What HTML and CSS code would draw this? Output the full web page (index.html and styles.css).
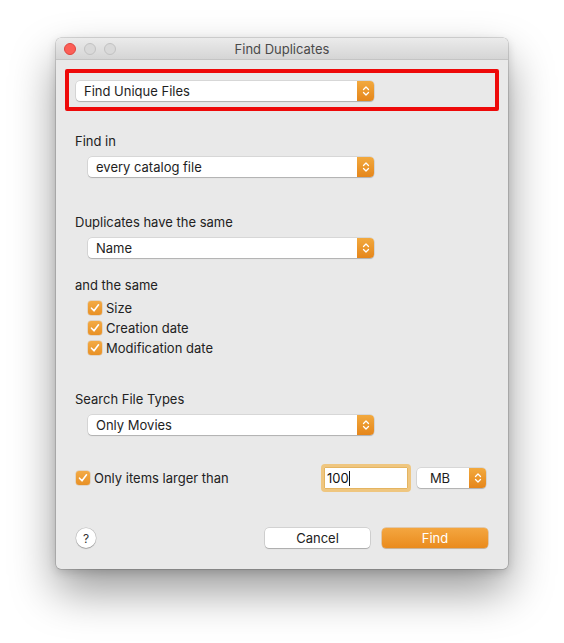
FILE: index.html
```html
<!DOCTYPE html>
<html>
<head>
<meta charset="utf-8">
<link rel="stylesheet" href="styles.css">
</head>
<body>
<div class="window">
  <div class="titlebar">
    <div class="lights">
      <span class="light red"></span>
      <span class="light gray"></span>
      <span class="light gray"></span>
    </div>
    <div class="title">Find Duplicates</div>
  </div>
  <div class="content">
    <div class="highlight">
      <div class="popup wide">
        <span class="popup-text">Find Unique Files</span>
        <span class="stepper"><svg width="8" height="12" viewBox="0 0 8 12"><path d="M1.5 4.5L4 2L6.5 4.5M1.5 7.5L4 10L6.5 7.5" fill="none" stroke="#fff" stroke-width="1.3" stroke-linecap="round" stroke-linejoin="round"/></svg></span>
      </div>
    </div>

    <div class="label l-findin">Find in</div>
    <div class="popup indented">
      <span class="popup-text">every catalog file</span>
      <span class="stepper"><svg width="8" height="12" viewBox="0 0 8 12"><path d="M1.5 4.5L4 2L6.5 4.5M1.5 7.5L4 10L6.5 7.5" fill="none" stroke="#fff" stroke-width="1.3" stroke-linecap="round" stroke-linejoin="round"/></svg></span>
    </div>

    <div class="label l-dup">Duplicates have the same</div>
    <div class="popup indented">
      <span class="popup-text">Name</span>
      <span class="stepper"><svg width="8" height="12" viewBox="0 0 8 12"><path d="M1.5 4.5L4 2L6.5 4.5M1.5 7.5L4 10L6.5 7.5" fill="none" stroke="#fff" stroke-width="1.3" stroke-linecap="round" stroke-linejoin="round"/></svg></span>
    </div>

    <div class="label l-and">and the same</div>
    <div class="checks">
      <label class="check-row"><span class="checkbox"><svg width="14" height="14" viewBox="0 0 14 14"><path d="M3.5 7.2L6 9.8L10.5 3.8" fill="none" stroke="#fff" stroke-width="1.6" stroke-linecap="round" stroke-linejoin="round"/></svg></span>Size</label>
      <label class="check-row"><span class="checkbox"><svg width="14" height="14" viewBox="0 0 14 14"><path d="M3.5 7.2L6 9.8L10.5 3.8" fill="none" stroke="#fff" stroke-width="1.6" stroke-linecap="round" stroke-linejoin="round"/></svg></span>Creation date</label>
      <label class="check-row"><span class="checkbox"><svg width="14" height="14" viewBox="0 0 14 14"><path d="M3.5 7.2L6 9.8L10.5 3.8" fill="none" stroke="#fff" stroke-width="1.6" stroke-linecap="round" stroke-linejoin="round"/></svg></span>Modification date</label>
    </div>

    <div class="label l-search">Search File Types</div>
    <div class="popup indented">
      <span class="popup-text">Only Movies</span>
      <span class="stepper"><svg width="8" height="12" viewBox="0 0 8 12"><path d="M1.5 4.5L4 2L6.5 4.5M1.5 7.5L4 10L6.5 7.5" fill="none" stroke="#fff" stroke-width="1.3" stroke-linecap="round" stroke-linejoin="round"/></svg></span>
    </div>

    <div class="size-row">
      <label class="check-row solo"><span class="checkbox"><svg width="14" height="14" viewBox="0 0 14 14"><path d="M3.5 7.2L6 9.8L10.5 3.8" fill="none" stroke="#fff" stroke-width="1.6" stroke-linecap="round" stroke-linejoin="round"/></svg></span>Only items larger than</label>
      <div class="field"><span class="field-text">100</span><span class="caret"></span></div>
      <div class="popup unit">
        <span class="popup-text center">MB</span>
        <span class="stepper"><svg width="8" height="12" viewBox="0 0 8 12"><path d="M1.5 4.5L4 2L6.5 4.5M1.5 7.5L4 10L6.5 7.5" fill="none" stroke="#fff" stroke-width="1.3" stroke-linecap="round" stroke-linejoin="round"/></svg></span>
      </div>
    </div>

    <div class="button-row">
      <div class="help">?</div>
      <div class="buttons">
        <div class="btn cancel">Cancel</div>
        <div class="btn primary">Find</div>
      </div>
    </div>
  </div>
</div>
</body>
</html>
```
FILE: styles.css
```css
html, body {
  margin: 0;
  padding: 0;
  background: #ffffff;
}
body {
  padding: 38px 0 0 56px;
  min-height: 643px;
  box-sizing: border-box;
  font-family: Inter, "Helvetica Neue", "Liberation Sans", sans-serif;
  font-size: 13px;
  color: #222;
}
.window {
  width: 452px;
  height: 531px;
  box-sizing: border-box;
  background: #e9e9e9;
  border-radius: 5px;
  box-shadow: 0 0 0 0.5px rgba(0,0,0,0.25), 0 22px 45px rgba(0,0,0,0.4), 0 3px 10px rgba(0,0,0,0.15);
  display: flex;
  flex-direction: column;
}
.titlebar {
  height: 22px;
  box-sizing: border-box;
  background: linear-gradient(#ebebeb, #d5d5d5);
  border-bottom: 1px solid #c4c4c4;
  border-radius: 5px 5px 0 0;
  display: flex;
  align-items: center;
}
.lights {
  display: flex;
  gap: 8px;
  padding-left: 8px;
}
.light {
  width: 12px;
  height: 12px;
  border-radius: 50%;
  box-sizing: border-box;
}
.light.red {
  background: #fc5f57;
  border: 0.5px solid #e0443e;
}
.light.gray {
  background: #d9d9d9;
  border: 0.5px solid #c2c2c2;
}
.title {
  flex: 1;
  text-align: center;
  margin-left: -60px;
  color: #4a4a4a;
  font-size: 13px;
  padding-top: 1px;
}
.content {
  display: flex;
  flex-direction: column;
  padding: 9px 20px 0 19px;
}
.highlight {
  width: 434px;
  height: 42px;
  margin-left: -10px;
  box-sizing: border-box;
  border: 4px solid #ee0a0a;
  border-radius: 2px;
  padding: 8px 0 0 7px;
}
.popup {
  height: 20px;
  box-sizing: border-box;
  background: #fff;
  border-radius: 4px;
  box-shadow: 0 0 0 0.5px rgba(0,0,0,0.15), 0 1px 1px rgba(0,0,0,0.18);
  display: flex;
  align-items: center;
}
.popup.wide { width: 298px; }
.popup.indented {
  width: 286px;
  margin-left: 13px;
  margin-top: 8px;
}
.popup-text {
  flex: 1;
  padding-left: 8px;
  color: #1e1e1e;
  line-height: 20px;
}
.popup-text.center {
  text-align: center;
  padding-left: 0;
  padding-right: 6px;
}
.stepper {
  width: 17px;
  height: 20px;
  border-radius: 0 4px 4px 0;
  background: linear-gradient(#f2a93e, #e5861b);
  display: flex;
  align-items: center;
  justify-content: center;
}
.label {
  line-height: 16px;
  color: #222;
}
.l-findin { margin-top: 22px; }
.l-dup { margin-top: 37px; }
.l-and { margin-top: 19px; }
.l-search { margin-top: 33px; }
.checks {
  margin-top: 5px;
  margin-left: 13px;
  display: flex;
  flex-direction: column;
}
.check-row {
  height: 20px;
  display: flex;
  align-items: center;
  gap: 4px;
  color: #222;
}
.checkbox {
  width: 14px;
  height: 14px;
  border-radius: 3px;
  background: linear-gradient(#f3aa45, #e89126);
  display: flex;
  align-items: center;
  justify-content: center;
  box-shadow: 0 0 0 0.5px rgba(180,100,0,0.3);
}
.size-row {
  margin-top: 29px;
  height: 28px;
  display: flex;
  align-items: center;
}
.check-row.solo {
  margin-left: 1px;
  width: 245px;
}
.field {
  width: 90px;
  height: 28px;
  box-sizing: border-box;
  border: 3px solid #efc67f;
  border-radius: 4px;
  background: #fff;
  display: flex;
  align-items: center;
  padding-left: 3px;
  box-shadow: inset 0 0 0 1px #e4b461;
}
.field-text {
  color: #111;
}
.caret {
  width: 1px;
  height: 15px;
  background: #111;
}
.popup.unit {
  width: 69px;
  margin-left: 6px;
}
.button-row {
  margin-top: 36px;
  display: flex;
  align-items: center;
  justify-content: space-between;
}
.help {
  width: 20px;
  height: 20px;
  margin-left: 1px;
  border-radius: 50%;
  background: #fff;
  box-shadow: 0 0 0 0.5px rgba(0,0,0,0.2), 0 1px 1px rgba(0,0,0,0.2);
  display: flex;
  align-items: center;
  justify-content: center;
  font-size: 12px;
  color: #333;
}
.buttons {
  display: flex;
  gap: 12px;
}
.btn {
  width: 105px;
  height: 20px;
  border-radius: 4px;
  display: flex;
  align-items: center;
  justify-content: center;
}
.cancel {
  background: #fff;
  color: #222;
  box-shadow: 0 0 0 0.5px rgba(0,0,0,0.2), 0 1px 1px rgba(0,0,0,0.18);
}
.primary {
  width: 106px;
  background: linear-gradient(#f4a640, #ea8b1d);
  color: #fff;
  box-shadow: 0 0 0 0.5px rgba(200,110,0,0.5), 0 1px 1px rgba(0,0,0,0.15);
}
```
